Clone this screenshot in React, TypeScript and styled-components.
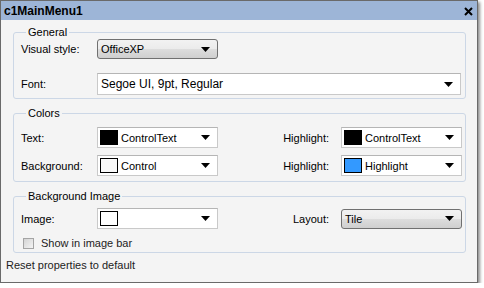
import styled, { createGlobalStyle } from "styled-components";

const GlobalStyle = createGlobalStyle`
  html, body {
    margin: 0;
    padding: 0;
    background: #ffffff;
  }
  body {
    font-family: "Liberation Sans", Arial, sans-serif;
    font-size: 11px;
    color: #000;
  }
`;

const Arrow = () => (
  <svg width="9" height="5" viewBox="0 0 9 5">
    <path d="M0 0 H9 L4.5 5 Z" fill="#000" />
  </svg>
);

const CloseIcon = () => (
  <svg width="9" height="9" viewBox="0 0 9 9">
    <path d="M1 1 L8 8 M8 1 L1 8" stroke="#000" strokeWidth="2" />
  </svg>
);

type ComboProps = {
  swatch?: string;
  text?: string;
  big?: boolean;
};

const ColorCombo = ({ swatch, text, big }: ComboProps) => (
  <Combo $big={big}>
    {swatch && <Swatch $color={swatch} />}
    <ComboText $big={big}>{text}</ComboText>
    <Arrow />
  </Combo>
);

const App = () => {
  return (
    <>
      <GlobalStyle />
      <Window>
        <TitleBar>
          <Title>c1MainMenu1</Title>
          <CloseButton>
            <CloseIcon />
          </CloseButton>
        </TitleBar>
        <Body>
          <Group>
            <Legend>General</Legend>
            <Row>
              <Label>Visual style:</Label>
              <Dropdown>
                <span>OfficeXP</span>
                <Arrow />
              </Dropdown>
            </Row>
            <Row $gap={14}>
              <Label>Font:</Label>
              <ColorCombo text="Segoe UI, 9pt, Regular" big />
            </Row>
          </Group>

          <Group $top={7} $bottom={5} $spaced={8}>
            <Legend>Colors</Legend>
            <ColorGrid>
              <Label>Text:</Label>
              <ColorCombo swatch="#000000" text="ControlText" />
              <RightLabel>Highlight:</RightLabel>
              <ColorCombo swatch="#000000" text="ControlText" />
              <Label>Background:</Label>
              <ColorCombo swatch="#f8f8f8" text="Control" />
              <RightLabel>Highlight:</RightLabel>
              <ColorCombo swatch="#3399ff" text="Highlight" />
            </ColorGrid>
          </Group>

          <Group $top={5} $bottom={3} $spaced={8}>
            <Legend>Background Image</Legend>
            <ColorGrid>
              <Label>Image:</Label>
              <ColorCombo swatch="#ffffff" text="" />
              <RightLabel>Layout:</RightLabel>
              <Dropdown>
                <span>Tile</span>
                <Arrow />
              </Dropdown>
            </ColorGrid>
            <CheckRow>
              <CheckBox />
              <span>Show in image bar</span>
            </CheckRow>
          </Group>

          <Footer>Reset properties to default</Footer>
        </Body>
      </Window>
    </>
  );
};

const Window = styled.div`
  width: 478px;
  height: 283px;
  box-sizing: border-box;
  border: 1px solid #6a6a6a;
  background: #f4f4f4;
  box-shadow: 2px 2px 3px rgba(0, 0, 0, 0.45);
  display: flex;
  flex-direction: column;
`;

const TitleBar = styled.div`
  height: 19px;
  background: #9db5d7;
  display: flex;
  align-items: center;
  justify-content: space-between;
  padding: 0 4px 0 3px;
  flex-shrink: 0;
`;

const Title = styled.div`
  font-weight: bold;
  font-size: 12px;
  color: #000;
`;

const CloseButton = styled.div`
  display: flex;
  align-items: center;
  padding-top: 1px;
`;

const Body = styled.div`
  flex: 1;
  display: flex;
  flex-direction: column;
  padding: 6px 11px 0 12px;
`;

const Group = styled.fieldset<{ $top?: number; $bottom?: number; $spaced?: number }>`
  margin: ${(p) => p.$spaced ?? 0}px 0 0 0;
  border: 1px solid #ccd7e6;
  border-radius: 3px;
  padding: ${(p) => p.$top ?? 0}px 4px ${(p) => p.$bottom ?? 3}px 7px;
  min-inline-size: 0;
  display: flex;
  flex-direction: column;
`;

const Legend = styled.legend`
  padding: 0 2px;
  margin-left: 5px;
  font-size: 11px;
  line-height: 13px;
  color: #000;
`;

const Row = styled.div<{ $gap?: number }>`
  display: flex;
  align-items: center;
  margin-top: ${(p) => p.$gap ?? 0}px;
`;

const Label = styled.div`
  width: 76px;
  flex-shrink: 0;
  white-space: nowrap;
`;

const RightLabel = styled.div`
  text-align: right;
  padding-right: 12px;
  white-space: nowrap;
`;

const ColorGrid = styled.div`
  display: grid;
  grid-template-columns: 76px 121px 1fr 120px;
  row-gap: 7px;
  align-items: center;
`;

const Dropdown = styled.div`
  width: 121px;
  height: 20px;
  box-sizing: border-box;
  border: 1px solid #707070;
  border-radius: 3px;
  background: linear-gradient(#f2f2f2 0%, #ebebeb 50%, #dddddd 51%, #cfcfcf 100%);
  display: flex;
  align-items: center;
  justify-content: space-between;
  padding: 0 7px 0 3px;
  font-size: 11px;
`;

const Combo = styled.div<{ $big?: boolean }>`
  width: ${(p) => (p.$big ? "364px" : "121px")};
  height: ${(p) => (p.$big ? "22px" : "21px")};
  box-sizing: border-box;
  border: 1px solid #c9c9c9;
  border-top-color: #b5b5b5;
  background: #ffffff;
  display: flex;
  align-items: center;
  padding: 0 7px 0 2px;
  gap: 3px;
`;

const Swatch = styled.div<{ $color: string }>`
  width: 18px;
  height: 15px;
  box-sizing: border-box;
  border: 1px solid #000;
  background: ${(p) => p.$color};
  flex-shrink: 0;
`;

const ComboText = styled.span<{ $big?: boolean }>`
  flex: 1;
  font-size: ${(p) => (p.$big ? "12px" : "11px")};
  padding-left: ${(p) => (p.$big ? "1px" : "0")};
  white-space: nowrap;
`;

const CheckRow = styled.div`
  display: flex;
  align-items: center;
  gap: 7px;
  margin-top: 8px;
  padding-left: 2px;
  color: #222;
`;

const CheckBox = styled.div`
  width: 11px;
  height: 11px;
  box-sizing: border-box;
  border: 1px solid #a4a4a4;
  background: linear-gradient(135deg, #d4d4d4, #f4f4f4);
`;

const Footer = styled.div`
  margin-top: 6px;
  margin-left: -7px;
  line-height: 13px;
  color: #222;
`;

export default App;
